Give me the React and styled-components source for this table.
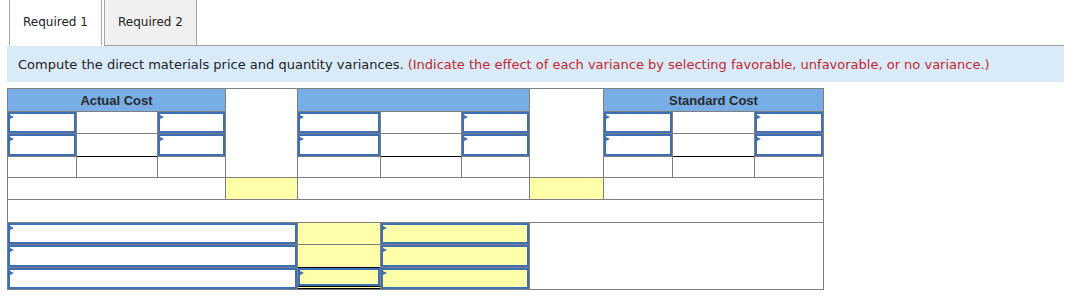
import React from 'react';
import styled, { createGlobalStyle } from 'styled-components';

const GlobalStyle = createGlobalStyle`
  body {
    margin: 0;
    background: #ffffff;
    font-family: 'DejaVu Sans', Verdana, sans-serif;
    color: #222222;
  }
`;

const Page = styled.div`
  padding-left: 7px;
  width: 1057px;
`;

const TabBar = styled.div`
  display: flex;
  height: 46px;
`;

const Tab = styled.div`
  box-sizing: border-box;
  width: 93px;
  height: 46px;
  margin-left: 2px;
  display: flex;
  align-items: center;
  justify-content: center;
  padding-bottom: 2px;
  font-size: 12px;
  color: #222;
  background: ${(p) => (p.$active ? '#ffffff' : '#f0f0f0')};
  border-left: 1px solid #a6a6a6;
  border-right: 1px solid #a6a6a6;
  border-bottom: 1px solid ${(p) => (p.$active ? 'transparent' : '#a0a0a0')};
`;

const TabFill = styled.div`
  flex: 1;
  border-bottom: 1px solid #a0a0a0;
`;

const Instructions = styled.div`
  height: 36px;
  display: flex;
  align-items: center;
  padding-left: 11px;
  background: #d9ebf9;
  font-size: 13px;
  color: #222;
`;

const Note = styled.span`
  color: #c1272d;
  margin-left: 4px;
`;

const Grid = styled.div`
  margin-top: 6px;
  display: grid;
  grid-template-columns: 68px 80px 67px 71px 82px 80px 67px 73px 68px 81px 68px;
  grid-template-rows: 22px 21px 22px 20px 21px 22px 21px 22px 21px;
  gap: 1px;
  padding: 1px;
  width: max-content;
  background: #7f7f7f;
`;

const Cell = styled.div`
  box-sizing: border-box;
  position: relative;
  display: flex;
  grid-column: ${(p) => p.$col};
  grid-row: ${(p) => p.$row};
  background: ${(p) => (p.$yellow ? '#ffffaa' : '#ffffff')};
  box-shadow: ${(p) => (p.$underline ? '0 1px 0 #000' : p.$overline ? '0 -1px 0 #000' : 'none')};
  border-bottom: ${(p) => (p.$double ? '3px double #000' : 'none')};
`;

const Header = styled(Cell)`
  align-items: center;
  justify-content: center;
  background: #79ade5;
  font-family: 'Liberation Sans', Arial, sans-serif;
  font-weight: bold;
  font-size: 13px;
  color: #2a2a2a;
`;

const Field = styled.div`
  box-sizing: border-box;
  position: relative;
  flex: 1;
  border: 2px solid #3c6fb6;

  &::before {
    content: '';
    position: absolute;
    left: -2px;
    top: 0;
    border-left: 6px solid #3c6fb6;
    border-top: 3px solid transparent;
    border-bottom: 3px solid transparent;
  }
`;

// first column of each group (A, B, C)
const groups = [1, 5, 9];

function GroupRows({ start }) {
  return (
    <>
      {[2, 3].map((row) => (
        <React.Fragment key={row}>
          <Cell $col={start} $row={row}>
            <Field />
          </Cell>
          <Cell $col={start + 1} $row={row} $underline={row === 3} />
          <Cell $col={start + 2} $row={row}>
            <Field />
          </Cell>
        </React.Fragment>
      ))}
      <Cell $col={start} $row={4} />
      <Cell $col={start + 1} $row={4} />
      <Cell $col={start + 2} $row={4} />
    </>
  );
}

export default function App() {
  return (
    <Page>
      <GlobalStyle />
      <TabBar>
        <Tab $active>Required 1</Tab>
        <Tab>Required 2</Tab>
        <TabFill />
      </TabBar>
      <Instructions>
        Compute the direct materials price and quantity variances.
        <Note>
          (Indicate the effect of each variance by selecting favorable, unfavorable, or no variance.)
        </Note>
      </Instructions>

      <Grid>
        <Header $col="1 / 4" $row={1}>Actual Cost</Header>
        <Cell $col={4} $row="1 / 5" />
        <Header $col="5 / 8" $row={1} />
        <Cell $col={8} $row="1 / 5" />
        <Header $col="9 / 12" $row={1}>Standard Cost</Header>

        {groups.map((g) => (
          <GroupRows key={g} start={g} />
        ))}

        <Cell $col="1 / 4" $row={5} />
        <Cell $col={4} $row={5} $yellow />
        <Cell $col="5 / 8" $row={5} />
        <Cell $col={8} $row={5} $yellow />
        <Cell $col="9 / 12" $row={5} />

        <Cell $col="1 / 12" $row={6} />

        {[7, 8, 9].map((row) => (
          <React.Fragment key={row}>
            <Cell $col="1 / 5" $row={row}>
              <Field />
            </Cell>
            {row === 9 ? (
              <Cell $col={5} $row={row} $yellow $overline $double>
                <Field />
              </Cell>
            ) : (
              <Cell $col={5} $row={row} $yellow />
            )}
            <Cell $col="6 / 8" $row={row} $yellow>
              <Field />
            </Cell>
          </React.Fragment>
        ))}
        <Cell $col="8 / 12" $row="7 / 10" />
      </Grid>
    </Page>
  );
}
